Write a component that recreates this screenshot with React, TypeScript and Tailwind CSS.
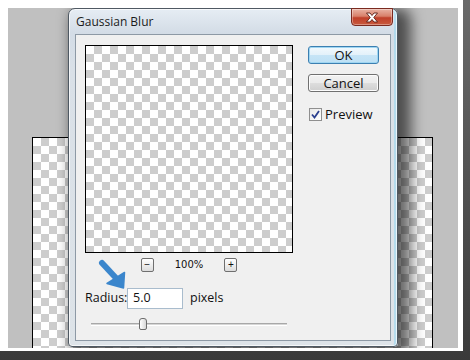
const checker =
  "bg-[image:conic-gradient(#cdcdcd_90deg,#ffffff_90deg_180deg,#cdcdcd_180deg_270deg,#ffffff_270deg)] bg-size-[16px_16px]"

const ui = "font-['Open_Sans','Noto_Sans',sans-serif]"

function CloseButton() {
  return (
    <div className="absolute top-[-1px] right-[4px] w-[42px] h-[18px] rounded-b-[4px] border border-[#7a2a20] bg-[linear-gradient(180deg,#e9b3a4_0%,#d8806a_45%,#c0402a_55%,#c85a3e_100%)] shadow-[inset_0_0_0_1px_rgba(255,255,255,0.35)] flex items-center justify-center">
      <svg width="14" height="11" viewBox="0 0 14 11">
        <path
          d="M1.5 1 L5 1 L7 3.5 L9 1 L12.5 1 L8.8 5.5 L12.5 10 L9 10 L7 7.5 L5 10 L1.5 10 L5.2 5.5 Z"
          fill="#ffffff"
          stroke="#5a1d14"
          strokeWidth="0.9"
          strokeLinejoin="round"
        />
      </svg>
    </div>
  )
}

function SmallButton({ label }: { label: string }) {
  return (
    <div className="w-[13px] h-[14px] rounded-[2px] border border-[#6f6f6f] bg-[linear-gradient(180deg,#ffffff,#dcdcdc)] flex items-center justify-center text-[10px] leading-none font-['Liberation_Sans',sans-serif] text-[#111]">
      {label}
    </div>
  )
}

function Dialog() {
  return (
    <div className="absolute left-[60px] top-0 w-[330px] h-[339px] rounded-t-[7px] rounded-b-[4px] border border-[#4f5963] bg-[linear-gradient(180deg,#e6edf4_0px,#d3dce6_24px,#d9e0e7_60px,#dde3e8_100%)] shadow-[inset_0_0_0_1px_rgba(255,255,255,0.7),inset_-3px_0_0_rgba(150,215,240,0.55),8px_5px_14px_5px_rgba(0,0,0,0.6)]">
      <CloseButton />
      <div className={`h-[25px] flex items-center pl-[7px] text-[12px] text-[#1b1b1b] ${ui}`}>Gaussian Blur</div>

      <div className={`mx-[6px] h-[307px] bg-[#f0f0f0] border border-[#8d99a5] pl-[9px] pt-[10px] text-[12.5px] text-[#111] ${ui}`}>
        <div className="flex">
          <div className="w-[208px] flex flex-col">
            <div className={`w-[208px] h-[208px] border border-black ${checker}`} />

            <div className="mt-[5px] h-[14px] flex items-center justify-center gap-[21px]">
              <SmallButton label="−" />
              <span className="text-[10px] leading-none font-['DejaVu_Sans',sans-serif] text-[#111]">100%</span>
              <SmallButton label="+" />
            </div>
          </div>

          <div className="ml-[15px] pt-[1px] flex flex-col text-[13px]">
            <div className="w-[71px] h-[18px] rounded-[3px] border border-[#3c7fb1] bg-[linear-gradient(180deg,#f2f9fd_0%,#e3f1fa_48%,#c6e4f6_52%,#bde0f5_100%)] shadow-[inset_0_0_0_1px_#9fd6f2] flex items-center justify-center leading-none">
              OK
            </div>
            <div className="mt-[10px] w-[71px] h-[18px] rounded-[3px] border border-[#707070] bg-[linear-gradient(180deg,#f2f2f2_0%,#ebebeb_48%,#dddddd_52%,#cfcfcf_100%)] shadow-[inset_0_0_0_1px_#fcfcfc] flex items-center justify-center leading-none">
              Cancel
            </div>
            <div className="mt-[16px] ml-[1px] flex items-center gap-[3px]">
              <div className="w-[13px] h-[13px] border border-[#8f8f8f] bg-[linear-gradient(135deg,#e8e8e8,#ffffff)] flex items-center justify-center">
                <svg width="9" height="9" viewBox="0 0 9 9">
                  <path d="M1 4.5 L3.5 7.5 L8 1" fill="none" stroke="#2a3f8f" strokeWidth="1.8" />
                </svg>
              </div>
              <span className="leading-none">Preview</span>
            </div>
          </div>
        </div>

        <div className="mt-[16px] flex items-center h-[21px]">
          <span className="w-[42px]">Radius:</span>
          <div className="w-[56px] h-[21px] border border-[#a9bccd] bg-white flex items-center pl-[5px]">5.0</div>
          <span className="ml-[7px]">pixels</span>
        </div>

        <div className="relative mt-[9px] ml-[6px] w-[196px] h-[12px]">
          <div className="absolute left-0 right-0 top-[5px] h-[3px] border-t border-[#a8a8a8] border-b border-b-white bg-[#d6d6d6]" />
          <div className="absolute left-[48px] top-0 w-[8px] h-[12px] rounded-t-[3px] rounded-b-[2px] border border-[#6d6d6d] bg-[linear-gradient(90deg,#ffffff,#d8d8d8)]" />
        </div>
      </div>
    </div>
  )
}

export default function App() {
  return (
    <div className="relative w-[470px] h-[360px] overflow-hidden bg-[linear-gradient(180deg,#6a6a6a,#3a3a3a)]">
      <div className="w-[463px] h-[351px] bg-white pt-[8px] pl-[8px]">
        <div className="relative w-[450px] h-[340px] overflow-hidden bg-[#c0c0c0] pt-[129px] pl-[24px]">
          <div className={`w-[401px] h-[211px] border-t border-l border-r border-black ${checker}`} />
          <Dialog />
        </div>
      </div>

      <svg className="absolute left-[96px] top-[256px]" width="34" height="36" viewBox="0 0 34 36">
        <path d="M6 7 L20 22" stroke="#3b86cc" strokeWidth="6" strokeLinecap="round" />
        <path d="M11 27.5 L28.5 16.5 L27.5 32 Z" fill="#3b86cc" stroke="#3b86cc" strokeWidth="1.5" strokeLinejoin="round" />
      </svg>
    </div>
  )
}
